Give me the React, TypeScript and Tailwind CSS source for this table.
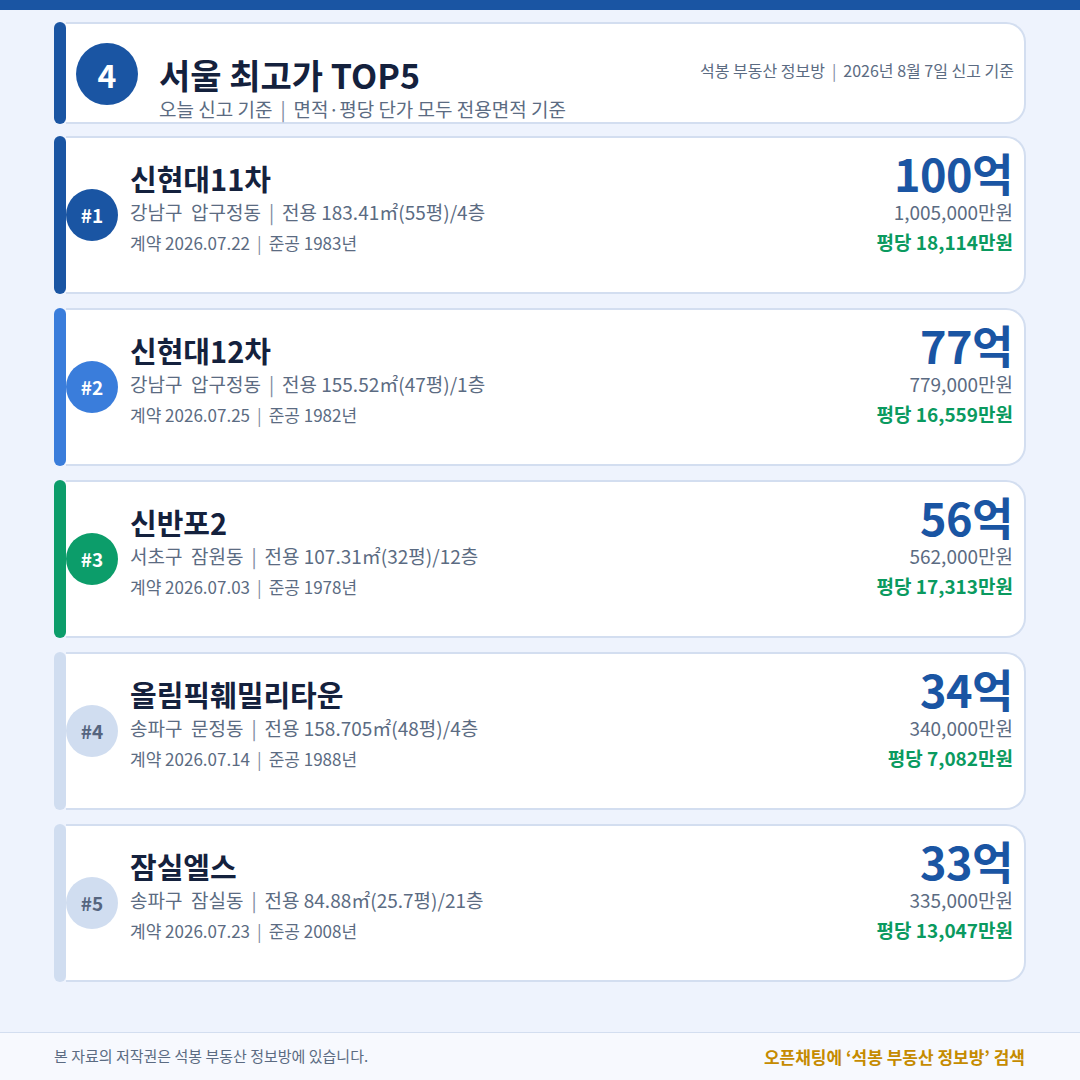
const items = [
  {
    rank: 1,
    name: "신현대11차",
    loc: "강남구  압구정동",
    area: "전용 183.41㎡(55평)/4층",
    date: "계약 2026.07.22",
    built: "준공 1983년",
    price: "100억",
    full: "1,005,000만원",
    pyeong: "평당 18,114만원",
    bar: "bg-[#1a55a3]",
    circle: "bg-[#1a55a3] text-white",
  },
  {
    rank: 2,
    name: "신현대12차",
    loc: "강남구  압구정동",
    area: "전용 155.52㎡(47평)/1층",
    date: "계약 2026.07.25",
    built: "준공 1982년",
    price: "77억",
    full: "779,000만원",
    pyeong: "평당 16,559만원",
    bar: "bg-[#3a7ddb]",
    circle: "bg-[#3a7ddb] text-white",
  },
  {
    rank: 3,
    name: "신반포2",
    loc: "서초구  잠원동",
    area: "전용 107.31㎡(32평)/12층",
    date: "계약 2026.07.03",
    built: "준공 1978년",
    price: "56억",
    full: "562,000만원",
    pyeong: "평당 17,313만원",
    bar: "bg-[#0c9d6a]",
    circle: "bg-[#0c9d6a] text-white",
  },
  {
    rank: 4,
    name: "올림픽훼밀리타운",
    loc: "송파구  문정동",
    area: "전용 158.705㎡(48평)/4층",
    date: "계약 2026.07.14",
    built: "준공 1988년",
    price: "34억",
    full: "340,000만원",
    pyeong: "평당 7,082만원",
    bar: "bg-[#d0ddf0]",
    circle: "bg-[#d0ddf0] text-[#55657f]",
  },
  {
    rank: 5,
    name: "잠실엘스",
    loc: "송파구  잠실동",
    area: "전용 84.88㎡(25.7평)/21층",
    date: "계약 2026.07.23",
    built: "준공 2008년",
    price: "33억",
    full: "335,000만원",
    pyeong: "평당 13,047만원",
    bar: "bg-[#d0ddf0]",
    circle: "bg-[#d0ddf0] text-[#55657f]",
  },
];

const Sep = ({ wide }: { wide?: boolean }) => (
  <span className={wide ? "mx-[8px] text-[#7d8aa0]" : "mx-[7px] text-[#7d8aa0]"}>|</span>
);

export default function App() {
  return (
    <div className="w-[1080px] h-[1080px] flex flex-col bg-[#eef3fd] font-['Noto_Sans_CJK_KR','Noto_Sans',sans-serif] overflow-hidden">
      <div className="h-[10px] bg-[#1a55a3] shrink-0" />
      <div className="flex-1 flex flex-col px-[54px] pt-[12px]">
        {/* header */}
        <div className="flex h-[102px]">
          <div className="w-[12px] bg-[#1a55a3] rounded-full shrink-0" />
          <div className="flex-1 flex bg-white border-2 border-l-0 border-[#d3def0] rounded-r-[20px] pl-[10px] pr-[10px]">
            <div className="w-[62px] h-[62px] mt-[19px] rounded-full bg-[#1a55a3] text-white flex items-center justify-center text-[32px] font-bold shrink-0">
              4
            </div>
            <div className="ml-[21px] flex flex-col pt-[32px]">
              <div className="text-[34px] leading-[38px] font-bold text-[#14213d]">서울 최고가 TOP5</div>
              <div className="text-[19px] leading-[30px] text-[#5b6b82] whitespace-pre">
                오늘 신고 기준<Sep wide />면적·평당 단가 모두 전용면적 기준
              </div>
            </div>
            <div className="ml-auto pt-[35px] text-[16px] leading-[22px] text-[#5b6b82]">
              석봉 부동산 정보방<Sep />2026년 8월 7일 신고 기준
            </div>
          </div>
        </div>

        <div className="mt-[12px] flex flex-col gap-[14px]">
          {items.map((it) => (
            <div key={it.rank} className="flex h-[158px]">
              <div className={`w-[12px] rounded-full shrink-0 ${it.bar}`} />
              <div className="flex-1 flex items-start bg-white border-2 border-l-0 border-[#d3def0] rounded-r-[20px] pr-[11px]">
                <div className={`self-center w-[52px] h-[52px] rounded-full flex items-center justify-center text-[19px] font-bold shrink-0 ${it.circle}`}>
                  #{it.rank}
                </div>
                <div className="ml-[12px] pt-[21px] flex flex-col">
                  <div className="text-[29px] leading-[38px] font-bold text-[#14213d]">{it.name}</div>
                  <div className="text-[19px] leading-[30px] text-[#5b6b82] whitespace-pre">
                    {it.loc}<Sep wide />{it.area}
                  </div>
                  <div className="text-[17px] leading-[32px] text-[#5b6b82]">
                    {it.date}<Sep />{it.built}
                  </div>
                </div>
                <div className="ml-auto pt-[11px] flex flex-col items-end">
                  <div className="text-[45px] leading-[48px] font-bold text-[#1a55a3] tracking-[-0.5px]">{it.price}</div>
                  <div className="text-[19px] leading-[30px] text-[#5b6b82]">{it.full}</div>
                  <div className="text-[19px] leading-[30px] font-bold text-[#0a9a5f]">{it.pyeong}</div>
                </div>
              </div>
            </div>
          ))}
        </div>
      </div>
      <div className="h-[48px] shrink-0 border-t border-[#d3def0] bg-[#f7f9fe] px-[54px] flex items-center justify-between">
        <div className="text-[15px] text-[#5b6b82]">본 자료의 저작권은 석봉 부동산 정보방에 있습니다.</div>
        <div className="text-[17px] font-bold text-[#c58b00] mr-[1px]">오픈채팅에 ‘석봉 부동산 정보방’ 검색</div>
      </div>
    </div>
  );
}
